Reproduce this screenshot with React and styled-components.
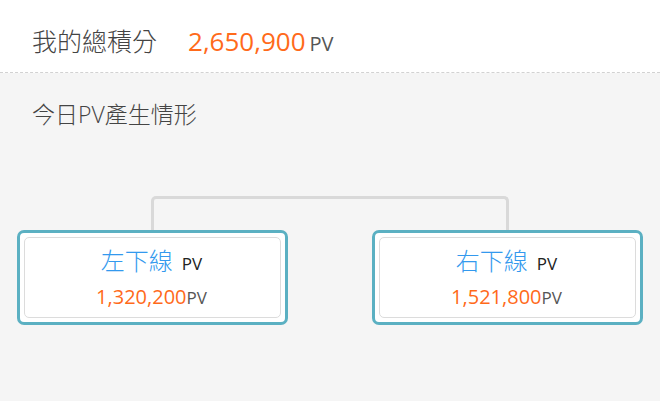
import React from 'react'
import styled, { createGlobalStyle } from 'styled-components'

const GlobalStyle = createGlobalStyle`
  html, body {
    margin: 0;
    padding: 0;
    background: #f5f5f5;
  }
  body {
    font-family: "Open Sans", "Noto Sans CJK TC", sans-serif;
  }
`

const Page = styled.div`
  width: 660px;
  height: 401px;
  background: #f5f5f5;
  overflow: hidden;
`

const Header = styled.div`
  height: 73px;
  box-sizing: border-box;
  background: #fff;
  border-bottom: 1px dashed #d2d2d2;
  display: flex;
  align-items: baseline;
  padding: 24px 32px 0;
`

const Label = styled.span`
  font-family: "Noto Sans CJK TC", sans-serif;
  font-weight: 300;
  font-size: 25px;
  line-height: 32px;
  color: #444;
  margin-right: 31px;
`

const Total = styled.span`
  font-size: 26px;
  line-height: 32px;
  color: #ff6a1a;
  margin-right: 4px;
`

const Unit = styled.span`
  font-size: ${p => p.size || 18}px;
  color: ${p => p.color || '#555'};
`

const Body = styled.div`
  padding: 26px 17px 0;
`

const Title = styled.div`
  font-family: "Open Sans", "Noto Sans CJK TC", sans-serif;
  font-weight: 300;
  font-size: 23px;
  line-height: 31px;
  color: #444;
  padding-left: 15px;
`

const Tree = styled.div`
  margin-top: 66px;
  display: flex;
  flex-direction: column;
`

const Connector = styled.div`
  margin: 0 134px;
  height: 35px;
  box-sizing: border-box;
  border: 3px solid #d9d9d9;
  border-bottom: none;
  border-radius: 5px 5px 0 0;
`

const Cards = styled.div`
  display: flex;
  justify-content: space-between;
  margin-top: -1px;
`

const Card = styled.div`
  width: 271px;
  height: 95px;
  box-sizing: border-box;
  border: 3px solid #5bb0c2;
  border-radius: 7px;
  background: #fff;
  padding: 4px;
`

const Inner = styled.div`
  height: 100%;
  box-sizing: border-box;
  border: 1px solid #dcdcdc;
  border-radius: 5px;
  display: flex;
  flex-direction: column;
  align-items: center;
  padding: 5px 2px 0 0;
`

const Name = styled.div`
  display: flex;
  align-items: baseline;
  gap: 9px;
`

const NameText = styled.span`
  font-family: "Noto Sans CJK TC", sans-serif;
  font-weight: 300;
  font-size: 24px;
  line-height: 34px;
  color: #3399ee;
`

const Amount = styled.div`
  margin-top: 6px;
  font-size: 20px;
  line-height: 28px;
  color: #ff6a1a;
`

const lines = [
  { name: '左下線', value: '1,320,200' },
  { name: '右下線', value: '1,521,800' },
]

export default function App() {
  return (
    <Page>
      <GlobalStyle />
      <Header>
        <Label>我的總積分</Label>
        <Total>2,650,900</Total>
        <Unit size={20}>PV</Unit>
      </Header>
      <Body>
        <Title>今日PV產生情形</Title>
        <Tree>
          <Connector />
          <Cards>
            {lines.map(l => (
              <Card key={l.name}>
                <Inner>
                  <Name>
                    <NameText>{l.name}</NameText>
                    <Unit size={17} color="#222">PV</Unit>
                  </Name>
                  <Amount>
                    {l.value}
                    <Unit size={17} color="#555">PV</Unit>
                  </Amount>
                </Inner>
              </Card>
            ))}
          </Cards>
        </Tree>
      </Body>
    </Page>
  )
}
